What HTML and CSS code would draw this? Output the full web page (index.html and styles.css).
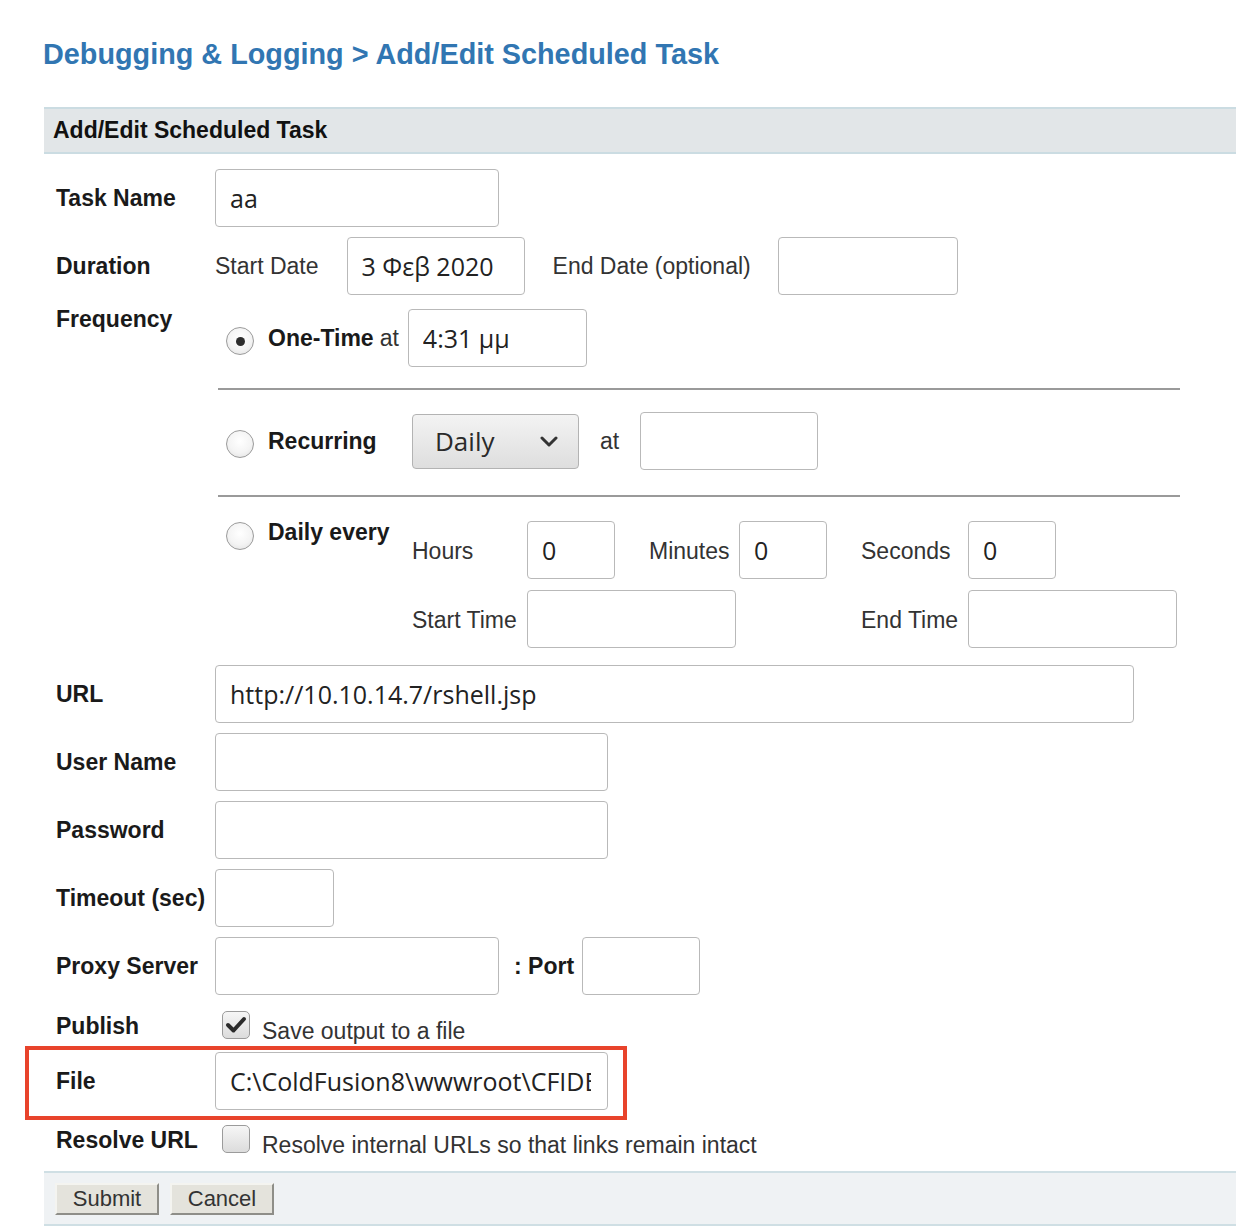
FILE: index.html
```html
<!DOCTYPE html>
<html lang="en">
<head>
<meta charset="utf-8">
<title>Add/Edit Scheduled Task</title>
<link rel="stylesheet" href="styles.css">
</head>
<body>
<h1 class="page-title">Debugging &amp; Logging &gt; Add/Edit Scheduled Task</h1>
<div class="panel">
  <div class="panel-head">Add/Edit Scheduled Task</div>
  <div class="panel-body">
    <div class="frow">
      <div class="flabel">Task Name</div>
      <input class="field w-task" value="aa">
    </div>
    <div class="frow">
      <div class="flabel">Duration</div>
      <span class="txt">Start Date</span>
      <input class="field w-date gap-l" value="3 Φεβ 2020">
      <span class="txt gap-l">End Date (optional)</span>
      <input class="field w-date2 gap-l2" value="">
    </div>
    <div class="frow freq-row">
      <div class="flabel freq-label">Frequency</div>
      <div class="freq">
        <div class="fline one-time">
          <div class="opt"><span class="radio checked"></span><span class="opt-label">One-Time</span><span class="txt at1">at</span></div>
          <input class="field w-time" value="4:31 μμ">
        </div>
        <div class="sep"></div>
        <div class="fline recurring">
          <div class="opt opt-col"><span class="radio"></span><span class="opt-label">Recurring</span></div>
          <div class="select"><span>Daily</span><svg class="chev" width="18" height="11" viewBox="0 0 18 11"><path d="M2 2 L9 9 L16 2" fill="none" stroke="#333" stroke-width="3" stroke-linecap="round" stroke-linejoin="round"/></svg></div>
          <span class="txt at2">at</span>
          <input class="field w-rec" value="">
        </div>
        <div class="sep sep2"></div>
        <div class="fline daily">
          <div class="opt opt-col opt-top"><span class="radio"></span><span class="opt-label">Daily every</span></div>
          <div class="dgrid">
            <span class="txt">Hours</span>
            <input class="field w-num" value="0">
            <span></span>
            <span class="txt">Minutes</span>
            <input class="field w-num" value="0">
            <span></span>
            <span class="txt">Seconds</span>
            <input class="field w-num" value="0">
            <span class="txt">Start Time</span>
            <input class="field w-span span3" value="">
            <span class="txt c7">End Time</span>
            <input class="field w-span" value="">
          </div>
        </div>
      </div>
    </div>
    <div class="frow r-url">
      <div class="flabel">URL</div>
      <input class="field w-url" value="http://10.10.14.7/rshell.jsp">
    </div>
    <div class="frow">
      <div class="flabel">User Name</div>
      <input class="field w-user" value="">
    </div>
    <div class="frow">
      <div class="flabel">Password</div>
      <input class="field w-user" type="text" value="">
    </div>
    <div class="frow">
      <div class="flabel">Timeout (sec)</div>
      <input class="field w-timeout" value="">
    </div>
    <div class="frow">
      <div class="flabel">Proxy Server</div>
      <input class="field w-task" value="">
      <span class="port-label">: Port</span>
      <input class="field w-port" value="">
    </div>
    <div class="frow crow r-publish">
      <div class="flabel">Publish</div>
      <span class="check checked"><svg width="22" height="18" viewBox="0 0 22 18"><path d="M3 9 L8.5 14.5 L19 3" fill="none" stroke="#2b2b2b" stroke-width="4" stroke-linecap="round" stroke-linejoin="round"/></svg></span>
      <span class="txt check-text">Save output to a file</span>
    </div>
    <div class="frow r-file">
      <div class="flabel">File</div>
      <input class="field w-user file-field" value="C:\ColdFusion8\wwwroot\CFIDE\shell.jsp">
      <span class="highlight"></span>
    </div>
    <div class="frow crow r-resolve">
      <div class="flabel">Resolve URL</div>
      <span class="check"></span>
      <span class="txt check-text">Resolve internal URLs so that links remain intact</span>
    </div>
  </div>
  <div class="panel-foot">
    <button class="btn">Submit</button>
    <button class="btn">Cancel</button>
  </div>
</div>
</body>
</html>
```
FILE: styles.css
```css
body {
  margin: 0;
  background: #fff;
  font-family: "Liberation Sans", Arial, sans-serif;
  color: #1a1a1a;
}

.page-title {
  margin: 37px 0 0 43px;
  font-size: 28.8px;
  line-height: 34px;
  font-weight: bold;
  color: #3176b2;
}

.panel {
  margin: 36px 0 0 44px;
}

.panel-head {
  border-top: 2px solid #cbdce2;
  border-bottom: 2px solid #cbdce2;
  background: #e2e6e8;
  height: 43px;
  line-height: 43px;
  padding-left: 9px;
  font-size: 23px;
  font-weight: bold;
  color: #111;
}

.panel-body {
  padding: 15px 0 0 12px;
}

.frow {
  display: flex;
  align-items: center;
  margin-top: 10px;
  position: relative;
}

.frow:first-child {
  margin-top: 0;
}

.flabel {
  width: 159px;
  flex: none;
  font-weight: bold;
  font-size: 23px;
  color: #1a1a1a;
}

.field {
  box-sizing: border-box;
  height: 58px;
  margin: 0;
  border: 1px solid #b9b9b9;
  border-radius: 4px;
  background: #fff;
  padding: 0 8px 0 14px;
  font-family: "Open Sans", "Noto Sans", sans-serif;
  font-size: 25px;
  color: #222;
  outline: none;
  flex: none;
}

.file-field {
  padding-right: 16px;
}

.txt {
  font-size: 23px;
  color: #333;
  white-space: nowrap;
}

.gap-l { margin-left: 28px; }
.gap-l2 { margin-left: 27px; }

.w-task { width: 284px; }
.w-date { width: 178px; }
.w-date2 { width: 180px; }
.w-time { width: 179px; }
.w-rec { width: 178px; }
.w-num { width: 88px; }
.w-span { width: 209px; }
.w-url { width: 919px; }
.w-user { width: 393px; }
.w-timeout { width: 119px; }
.w-port { width: 118px; }

/* Frequency block */
.freq-row {
  align-items: flex-start;
}

.freq-label {
  line-height: 28px;
}

.freq {
  padding-top: 4px;
}

.fline {
  display: flex;
  align-items: center;
  padding-left: 11px;
}

.opt {
  display: flex;
  align-items: center;
}

.opt-col {
  width: 186px;
  flex: none;
}

.opt-top {
  align-self: flex-start;
  align-items: flex-start;
}

.opt-label {
  font-size: 23px;
  font-weight: bold;
  margin-left: 14px;
  white-space: nowrap;
}

.at1 {
  margin-left: 6px;
  margin-right: 9px;
}

.radio {
  box-sizing: border-box;
  width: 28px;
  height: 28px;
  border-radius: 50%;
  border: 1.5px solid #9b9b9b;
  background: radial-gradient(circle at 50% 40%, #ffffff 0%, #f4f4f4 55%, #dedede 100%);
  flex: none;
  position: relative;
}

.one-time .radio {
  margin-top: 6px;
}

.recurring .radio {
  margin-top: 6px;
}

.radio.checked::after {
  content: "";
  position: absolute;
  left: 50%;
  top: 50%;
  width: 9px;
  height: 9px;
  margin: -4.5px 0 0 -4.5px;
  border-radius: 50%;
  background: #2d2d2d;
}

.sep {
  margin: 21px 0 0 3px;
  width: 962px;
  height: 2px;
  background: #9a9a9a;
}

.recurring {
  margin-top: 22px;
}

.sep2 {
  margin-top: 25px;
}

.select {
  box-sizing: border-box;
  width: 167px;
  height: 55px;
  border: 1px solid #b3b3b3;
  border-radius: 4px;
  background: linear-gradient(#f3f3f3, #dedede);
  display: flex;
  align-items: center;
  justify-content: space-between;
  padding: 0 20px 0 22px;
  font-family: "Open Sans", "Noto Sans", sans-serif;
  font-size: 26px;
  color: #2a2a2a;
}

.at2 {
  margin: 0 21px;
}

.daily {
  margin-top: 24px;
  align-items: flex-start;
}

.daily .opt-label {
  line-height: 22px;
  margin-top: 0;
}

.daily .radio {
  margin-top: 1px;
}

.dgrid {
  display: grid;
  grid-template-columns: 115px 86px 36px 90px 87px 35px 107px auto;
  grid-template-rows: 58px 58px;
  row-gap: 11px;
  align-items: center;
  justify-items: start;
}

.dgrid .txt {
  margin-top: 3px;
}

.span3 {
  grid-column: 2 / span 3;
}

.c7 {
  grid-column: 7;
}

/* other rows */
.r-url {
  margin-top: 17px;
}

.port-label {
  font-size: 23px;
  font-weight: bold;
  margin: 0 8px 0 15px;
}

.crow {
  align-items: flex-start;
}

.crow .flabel {
  line-height: 28px;
  padding-top: 1px;
}

.check {
  box-sizing: border-box;
  width: 28px;
  height: 28px;
  margin-left: 7px;
  border: 1.5px solid #9b9b9b;
  border-radius: 5px;
  background: linear-gradient(#f6f6f6, #dcdcdc);
  display: flex;
  align-items: center;
  justify-content: center;
  flex: none;
}

.check-text {
  margin-left: 12px;
  line-height: 28px;
  padding-top: 6px;
}

.r-publish {
  margin-top: 16px;
}

.r-file {
  margin-top: 7px;
}

.highlight {
  position: absolute;
  left: -31px;
  top: -6px;
  width: 602px;
  height: 74px;
  box-sizing: border-box;
  border: 4px solid #e8432b;
  pointer-events: none;
}

.r-resolve {
  margin-top: 15px;
}

.panel-foot {
  margin-top: 12px;
  border-top: 2px solid #cfdfe4;
  border-bottom: 2px solid #cfdfe4;
  background: #eff2f4;
  height: 51px;
  padding-left: 11px;
  display: flex;
  align-items: center;
  gap: 11px;
}

.btn {
  box-sizing: border-box;
  height: 32px;
  width: 104px;
  padding: 0;
  font-family: "Liberation Sans", Arial, sans-serif;
  font-size: 22px;
  color: #333;
  background: #e4e3dc;
  border: 2px solid;
  border-color: #f4f4f0 #8e8e88 #8e8e88 #f4f4f0;
  border-radius: 0;
  line-height: 26px;
}
```
